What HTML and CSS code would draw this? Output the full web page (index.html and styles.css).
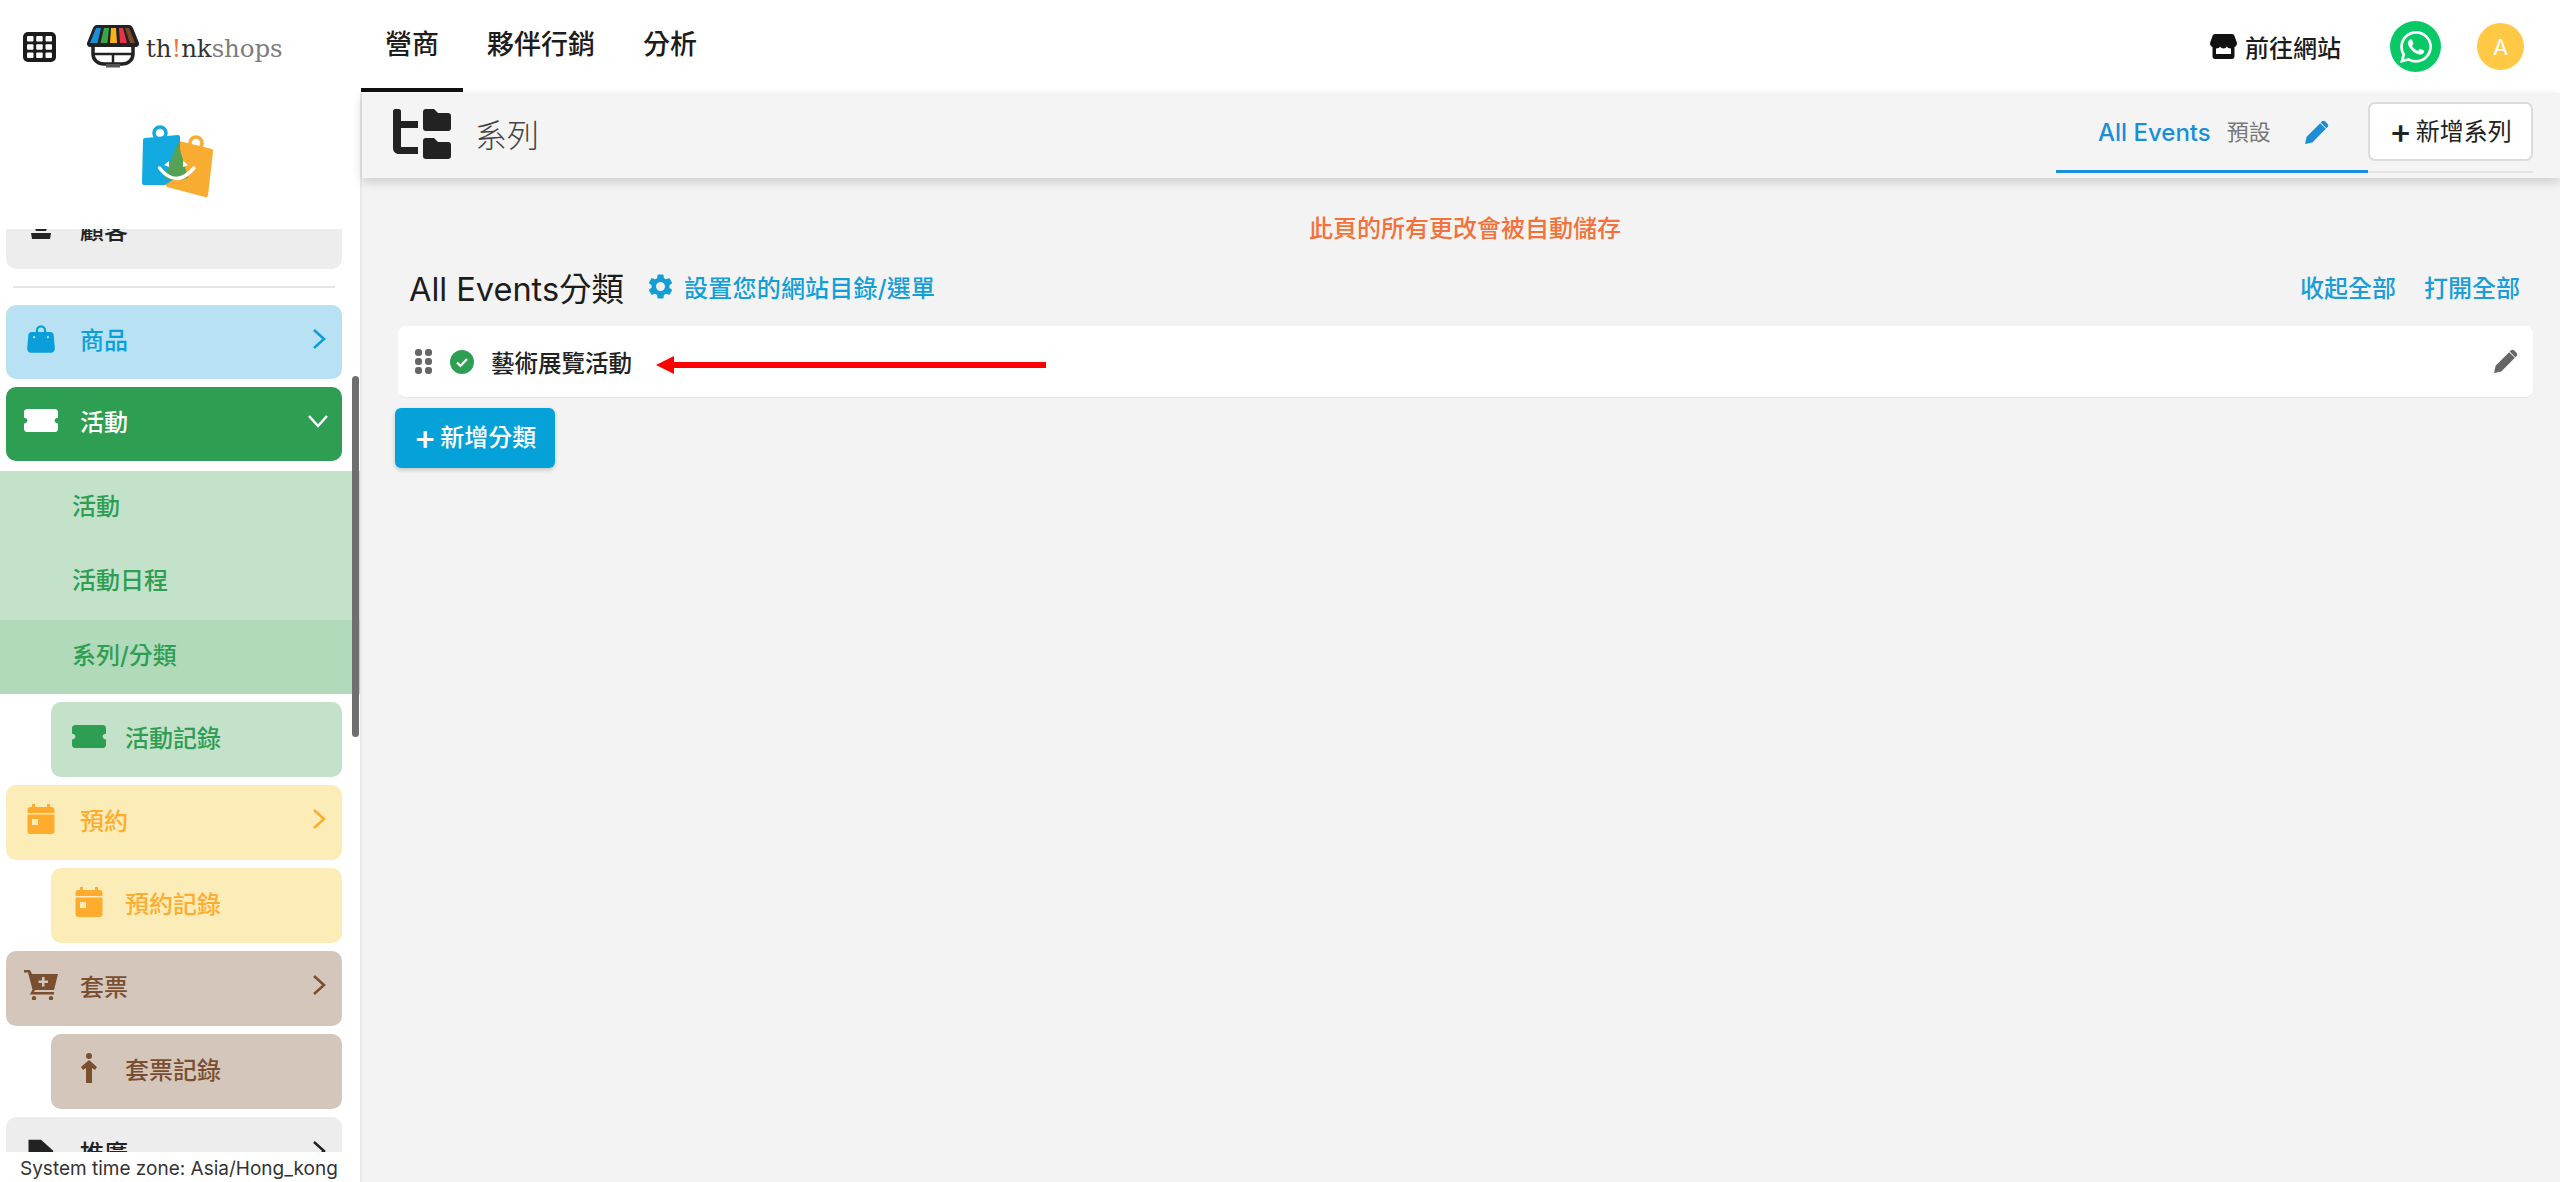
FILE: index.html
```html
<!DOCTYPE html>
<html lang="zh-Hant">
<head>
    <meta charset="UTF-8">
    <title>系列</title>
    <link rel="stylesheet" href="styles.css">
</head>
<body>

<header class="topbar">
    <div class="brand">
        <svg class="apps-icon" viewBox="0 0 33 30">
            <rect width="33" height="30" rx="5" fill="#1c1c1c"/>
            <g fill="#fff">
                <rect x="4" y="4" width="6.5" height="5.5" rx="1"/><rect x="13.2" y="4" width="6.5" height="5.5" rx="1"/><rect x="22.5" y="4" width="6.5" height="5.5" rx="1"/>
                <rect x="4" y="12.2" width="6.5" height="5.5" rx="1"/><rect x="13.2" y="12.2" width="6.5" height="5.5" rx="1"/><rect x="22.5" y="12.2" width="6.5" height="5.5" rx="1"/>
                <rect x="4" y="20.5" width="6.5" height="5.5" rx="1"/><rect x="13.2" y="20.5" width="6.5" height="5.5" rx="1"/><rect x="22.5" y="20.5" width="6.5" height="5.5" rx="1"/>
            </g>
        </svg>
        <svg class="shop-logo" viewBox="0 0 54 44">
            <path d="M7 20h40v10c0 6-5 10-11 10H18C12 40 7 36 7 30z" fill="#fff" stroke="#222" stroke-width="3.5"/>
            <path d="M8 30h38M27 30v9" stroke="#222" stroke-width="2.5" fill="none"/>
            <rect x="20" y="40" width="14" height="3.5" fill="#555"/>
            <path d="M11 1h32c2 0 3 1 4 3l6 15c.5 2-1 4-3 4H4c-2 0-3.5-2-3-4L7 4c1-2 2-3 4-3z" fill="#222"/>
            <path d="M10 4h5l-3.5 15H4z" fill="#1b8fd6"/>
            <path d="M18 4h5l-1.5 15h-7z" fill="#3aa648"/>
            <path d="M25 4h5l1 15h-7z" fill="#f6b21b"/>
            <path d="M33 4h4l4 15h-7z" fill="#e8344a"/>
            <path d="M39 4h4l6 15h-5z" fill="#7b4a26"/>
        </svg>
        <span class="shop-name">th<b>!</b>nk<i>shops</i></span>
    </div>
    <nav class="topnav">
        <a class="topnav-link active">營商</a>
        <a class="topnav-link">夥伴行銷</a>
        <a class="topnav-link">分析</a>
    </nav>
    <div class="topbar-right">
        <a class="site-link">
            <svg viewBox="0 0 27 25"><path d="M5 0h17c1.500 0 2 .7 2.500 2L27 9c0 2-1 3.500-2.500 4v9c0 1.700-1 3-2.500 3H5c-1.500 0-2.500-1.300-2.500-3v-9C1 12.500 0 11 0 9l2.500-7C3 .7 3.500 0 5 0zM6 14.500V20h15v-5.500c-2.500 0-3.500-1-4-2-.7 1-2 2-3.500 2s-2.800-1-3.500-2c-.5 1-1.500 2-4 2z" fill="#111" fill-rule="evenodd"/></svg>
            前往網站
        </a>
        <span class="whatsapp">
            <svg viewBox="0 0 24 24"><path fill="#fff" d="M17.472 14.382c-.297-.149-1.758-.867-2.03-.967-.273-.099-.471-.148-.67.15-.197.297-.767.966-.94 1.164-.173.199-.347.223-.644.075-.297-.15-1.255-.463-2.39-1.475-.883-.788-1.48-1.761-1.653-2.059-.173-.297-.018-.458.13-.606.134-.133.298-.347.446-.52.149-.174.198-.298.298-.497.099-.198.05-.371-.025-.52-.075-.149-.669-1.612-.916-2.207-.242-.579-.487-.5-.669-.51-.173-.008-.371-.01-.57-.01-.198 0-.52.074-.792.372-.272.297-1.04 1.016-1.04 2.479 0 1.462 1.065 2.875 1.213 3.074.149.198 2.096 3.2 5.077 4.487.709.306 1.262.489 1.694.625.712.227 1.36.195 1.871.118.571-.085 1.758-.719 2.006-1.413.248-.694.248-1.289.173-1.413-.074-.124-.272-.198-.57-.347m-5.421 7.403h-.004a9.87 9.87 0 01-5.031-1.378l-.361-.214-3.741.982.998-3.648-.235-.374a9.86 9.86 0 01-1.51-5.26c.001-5.45 4.436-9.884 9.888-9.884 2.64 0 5.122 1.03 6.988 2.898a9.825 9.825 0 012.893 6.994c-.003 5.45-4.437 9.884-9.885 9.884m8.413-18.297A11.815 11.815 0 0012.05 0C5.495 0 .16 5.335.157 11.892c0 2.096.547 4.142 1.588 5.945L.057 24l6.305-1.654a11.882 11.882 0 005.683 1.448h.005c6.554 0 11.89-5.335 11.893-11.893a11.821 11.821 0 00-3.48-8.413z"/></svg>
        </span>
        <span class="avatar">A</span>
    </div>
</header>

<div class="page">
    <aside class="sidebar">
        <div class="sidebar-logo">
            <svg viewBox="0 0 74 74" class="bags">
                <circle cx="55" cy="18" r="6" fill="none" stroke="#f8ac32" stroke-width="3.500"/>
                <path d="M30 14L71 24Q73 25 72 27L67 70Q67 73 64 72L26 62Q24 61 25 59z" fill="#f8ac32"/>
                <circle cx="19" cy="8" r="6" fill="none" stroke="#12a8e0" stroke-width="3.500"/>
                <path d="M4 13L37 10Q39 10 39 12V50L24 60H3Q1 60 1 58L2 15Q2 13 4 13z" fill="#12a8e0"/>
                <path d="M37 17L23 53Q35 57 47 53z" fill="#55a257"/>
                <path d="M18.500 43Q35 64 53 43" fill="none" stroke="#fff" stroke-width="3.500" stroke-linecap="round"/>
                <path d="M23 40l5-4v6zM47 40l-5-4v6z" fill="#fff"/>
            </svg>
        </div>
        <div class="menu-wrap">
            <div class="menu">
                <a class="menu-item grey">
                    <svg viewBox="0 0 34 30"><path d="M0 6h34v4H0zM9 10h16l-3 8H12zM7 20h20l-1 6H8z"/></svg>
                    <span>顧客</span>
                </a>
                <hr class="menu-divider">
                <a class="menu-item short blue">
                    <svg viewBox="0 0 24 26"><path fill-rule="evenodd" d="M7.500 8V6.500a4.500 4.500 0 0 1 9 0V8H20c2 0 3 1.200 3 3l1 11.500c0 2-1.500 3.500-3.500 3.500h-17C1.500 26 0 24.500 0 22.500L1 11c0-1.800 1-3 3-3zm2 0h5V6.500a2.500 2.500 0 0 0-5 0zM6 11.500a1 1 0 1 0 0 2 1 1 0 0 0 0-2zm12 0a1 1 0 1 0 0 2 1 1 0 0 0 0-2z" transform="translate(0 -1)"/></svg>
                    <span>商品</span>
                    <svg class="chevron" viewBox="0 0 14 22"><path d="M2 2l10 9-10 9"/></svg>
                </a>
                <a class="menu-item short green">
                    <svg class="ticket" viewBox="2 4 20 16" preserveAspectRatio="none"><path d="M22 10V6c0-1.110-.9-2-2-2H4c-1.100 0-1.990.89-1.990 2v4c1.100 0 1.990.9 1.990 2s-.89 2-2 2v4c0 1.100.9 2 2 2h16c1.100 0 2-.9 2-2v-4c-1.100 0-2-.9-2-2s.9-2 2-2z"/></svg>
                    <span>活動</span>
                    <svg class="chevron down" viewBox="0 0 22 14"><path d="M2 2l9 10 9-10"/></svg>
                </a>
                <div class="submenu">
                    <a class="submenu-row">活動</a>
                    <a class="submenu-row">活動日程</a>
                    <a class="submenu-row selected">系列/分類</a>
                </div>
                <a class="menu-item child green-light">
                    <svg class="ticket" viewBox="2 4 20 16" preserveAspectRatio="none"><path d="M22 10V6c0-1.110-.9-2-2-2H4c-1.100 0-1.990.89-1.990 2v4c1.100 0 1.990.9 1.990 2s-.89 2-2 2v4c0 1.100.9 2 2 2h16c1.100 0 2-.9 2-2v-4c-1.100 0-2-.9-2-2s.9-2 2-2z"/></svg>
                    <span>活動記錄</span>
                </a>
                <a class="menu-item yellow">
                    <svg viewBox="3 1 18 20"><path fill-rule="evenodd" d="M6 1h2v2h8V1h2v2h1a2 2 0 0 1 2 2v2H3V5a2 2 0 0 1 2-2h1zM3 8h18v11a2 2 0 0 1-2 2H5a2 2 0 0 1-2-2zm3 3v4h4v-4z"/></svg>
                    <span>預約</span>
                    <svg class="chevron" viewBox="0 0 14 22"><path d="M2 2l10 9-10 9"/></svg>
                </a>
                <a class="menu-item child yellow">
                    <svg viewBox="3 1 18 20"><path fill-rule="evenodd" d="M6 1h2v2h8V1h2v2h1a2 2 0 0 1 2 2v2H3V5a2 2 0 0 1 2-2h1zM3 8h18v11a2 2 0 0 1-2 2H5a2 2 0 0 1-2-2zm3 3v4h4v-4z"/></svg>
                    <span>預約記錄</span>
                </a>
                <a class="menu-item brown">
                    <svg class="cart" viewBox="0 0 34 30"><path fill-rule="evenodd" d="M0 0h6l2 4h26l-4 16H11l-1 2h20v2.500H6l2.500-5L4 2.500H0zM18 7v3.500h-3.500v2.500H18v3.500h2.500V13H24v-2.500h-3.500V7zM10 26a2.200 2.200 0 1 1 0 4.400 2.200 2.200 0 0 1 0-4.400zm17 0a2.200 2.200 0 1 1 0 4.400 2.200 2.200 0 0 1 0-4.400z"/></svg>
                    <span>套票</span>
                    <svg class="chevron" viewBox="0 0 14 22"><path d="M2 2l10 9-10 9"/></svg>
                </a>
                <a class="menu-item child brown">
                    <svg viewBox="0 0 24 30" class="man"><circle cx="12" cy="3" r="3"/><path d="M12 7l8 7-2 3-3-2v15H9V15l-3 2-2-3z"/></svg>
                    <span>套票記錄</span>
                </a>
                <a class="menu-item grey">
                    <svg viewBox="0 0 24 24"><path d="M2 3h10l10 9-7 10-13-8z"/></svg>
                    <span>推廣</span>
                    <svg class="chevron" viewBox="0 0 14 22"><path d="M2 2l10 9-10 9"/></svg>
                </a>
            </div>
            <div class="scroll-thumb"></div>
        </div>
        <div class="timezone">System time zone: Asia/Hong_kong</div>
    </aside>

    <main class="content">
        <div class="subheader">
            <svg class="tree-icon" viewBox="0 0 58 50">
                <path d="M0 2c0-1 1-2 2-2h4c1 0 2 1 2 2v10h17v7H8v19h17v7H6c-3.500 0-6-2.500-6-6z" fill="#222"/>
                <path d="M30 3c0-2 1-3 3-3h8l4 4h10c2 0 3 1 3 3v12c0 2-1 3-3 3H33c-2 0-3-1-3-3zM30 32c0-2 1-3 3-3h8l4 4h10c2 0 3 1 3 3v11c0 2-1 3-3 3H33c-2 0-3-1-3-3z" fill="#222"/>
            </svg>
            <h1 class="page-title">系列</h1>
            <div class="tabs">
                <div class="tab active">
                    <span class="tab-name">All Events</span>
                    <span class="tab-tag">預設</span>
                    <svg viewBox="0 0 24 24" class="pencil blue-fill"><path d="M1 23l1.500-7L15.500 3l5.500 5.500L8 21.500zM17 1.500c1-1 2.500-1 3.500 0l2 2c1 1 1 2.500 0 3.500l-1 1L16 2.500z"/></svg>
                </div>
                <button class="add-series"><span class="plus">+</span>新增系列</button>
            </div>
        </div>

        <div class="body-area">
            <p class="autosave">此頁的所有更改會被自動儲存</p>
            <div class="section-head">
                <h2 class="section-title">All Events分類</h2>
                <a class="link-setting">
                    <svg viewBox="3 2 18 20"><path d="M19.140 12.940c.04-.3.06-.61.06-.94 0-.32-.02-.64-.07-.94l2.030-1.580c.18-.14.23-.41.12-.61l-1.920-3.320c-.12-.22-.37-.29-.59-.22l-2.390.96c-.5-.38-1.030-.7-1.620-.94l-.36-2.540c-.04-.24-.24-.41-.48-.41h-3.840c-.24 0-.43.17-.47.41l-.36 2.540c-.59.24-1.130.57-1.620.94l-2.390-.96c-.22-.08-.47 0-.59.22L2.740 8.870c-.12.21-.08.47.12.61l2.030 1.580c-.05.3-.09.63-.09.94s.02.64.07.94l-2.030 1.580c-.18.14-.23.41-.12.61l1.920 3.320c.12.22.37.29.59.22l2.390-.96c.5.38 1.030.7 1.620.94l.36 2.540c.05.24.24.41.48.41h3.840c.24 0 .44-.17.47-.41l.36-2.540c.59-.24 1.130-.56 1.620-.94l2.390.96c.22.08.47 0 .59-.22l1.920-3.320c.12-.22.07-.47-.12-.61l-2.010-1.580zM12 15.600c-1.980 0-3.600-1.620-3.600-3.600s1.620-3.600 3.600-3.600 3.600 1.620 3.600 3.600-1.620 3.600-3.600 3.600z"/></svg>
                    設置您的網站目錄/選單
                </a>
                <div class="section-actions">
                    <a>收起全部</a>
                    <a>打開全部</a>
                </div>
            </div>
            <div class="category-row">
                <svg class="drag" viewBox="0 0 19 27"><g fill="#666"><rect x="1" y="1" width="7" height="7" rx="3"/><rect x="11" y="1" width="7" height="7" rx="3"/><rect x="1" y="10" width="7" height="7" rx="3"/><rect x="11" y="10" width="7" height="7" rx="3"/><rect x="1" y="19" width="7" height="7" rx="3"/><rect x="11" y="19" width="7" height="7" rx="3"/></g></svg>
                <svg class="check" viewBox="0 0 24 24"><circle cx="12" cy="12" r="12" fill="#2e9e53"/><path d="M7 12.500l3.500 3.500L17 9" fill="none" stroke="#fff" stroke-width="2.200"/></svg>
                <span class="category-name">藝術展覽活動</span>
                <svg viewBox="0 0 24 24" class="pencil grey-fill"><path d="M1 23l1.500-7L15.500 3l5.500 5.500L8 21.500zM17 1.500c1-1 2.500-1 3.500 0l2 2c1 1 1 2.500 0 3.500l-1 1L16 2.500z"/></svg>
                <svg class="red-arrow" viewBox="0 0 390 18"><path d="M0 9L18 0v6h372v6H18v6z" fill="#f00"/></svg>
            </div>
            <button class="add-category"><span class="plus">+</span>新增分類</button>
        </div>
    </main>
</div>

</body>
</html>
```

FILE: styles.css
```css
* {
    box-sizing: border-box;
}
html, body {
    height: 100%;
    margin: 0;
}
body {
    font-family: Inter, "Noto Sans CJK TC", sans-serif;
    color: #1c1c1c;
    background-color: #fff;
    display: flex;
    flex-direction: column;
    overflow: hidden;
}
a {
    cursor: pointer;
}

/* top bar */
.topbar {
    height: 93px;
    flex: none;
    display: flex;
    align-items: center;
    background-color: #fff;
}
.brand {
    width: 361px;
    display: flex;
    align-items: center;
    padding-left: 23px;
}
.apps-icon {
    width: 33px;
    height: 30px;
    margin-right: 30px;
}
.shop-logo {
    width: 54px;
    height: 44px;
    margin-top: -1px;
}
.shop-name {
    font-family: "DejaVu Serif", serif;
    font-size: 24.500px;
    letter-spacing: -0.100px;
    color: #333;
    margin-left: 6px;
    margin-top: 3px;
}
.shop-name b {
    color: #f0743e;
    font-weight: 400;
}
.shop-name i {
    color: #7d7d7d;
    font-style: normal;
}
.topnav {
    display: flex;
    align-self: stretch;
    margin-top: -1px;
}
.topnav-link {
    height: 93px;
    padding: 0 24px;
    display: flex;
    align-items: center;
    font-size: 27px;
    font-weight: 500;
    padding-bottom: 3px;
    border-bottom: 4px solid transparent;
}
.topnav-link.active {
    border-bottom-color: #111;
}
.topbar-right {
    margin-left: auto;
    display: flex;
    align-items: center;
    padding-right: 36px;
}
.site-link {
    display: flex;
    align-items: center;
    font-size: 24px;
    font-weight: 500;
    margin-right: 49px;
}
.site-link svg {
    width: 27px;
    height: 25px;
    margin-right: 8px;
}
.whatsapp {
    width: 51px;
    height: 51px;
    border-radius: 50%;
    background-color: #09c966;
    display: flex;
    align-items: center;
    justify-content: center;
    margin-right: 36px;
}
.whatsapp svg {
    width: 32px;
    height: 32px;
}
.avatar {
    width: 47px;
    height: 47px;
    border-radius: 50%;
    background-color: #ffc845;
    color: #fff;
    font-size: 22px;
    display: flex;
    align-items: center;
    justify-content: center;
}

/* sidebar */
.page {
    flex: 1;
    display: flex;
    min-height: 0;
}
.sidebar {
    width: 362px;
    flex: none;
    display: flex;
    flex-direction: column;
    border-right: 2px solid #e8e8e8;
    background-color: #fff;
}
.sidebar-logo {
    height: 136px;
    flex: none;
    display: flex;
    align-items: flex-start;
    padding: 32px 0 0 141px;
}
.bags {
    width: 74px;
    height: 74px;
}
.menu-wrap {
    flex: 1;
    position: relative;
    overflow: hidden;
    min-height: 0;
}
.menu {
    display: flex;
    flex-direction: column;
    gap: 8px;
    padding: 0 18px 0 6px;
    margin-top: -35px;
}
.menu-item {
    height: 75px;
    flex: none;
    display: flex;
    align-items: center;
    padding: 0 16px 7px 18px;
    border-radius: 10px;
    font-size: 24px;
    font-weight: 500;
}
.menu-item.short {
    height: 74px;
}
.menu-item.child {
    margin-left: 45px;
    padding-left: 21px;
}
.menu-item > svg:first-child {
    width: 34px;
    height: 30px;
    margin-right: 22px;
    fill: currentColor;
}
.menu-item.child > svg:first-child {
    margin-right: 19px;
}
.menu-item > svg.ticket {
    height: 23px;
}
.chevron {
    width: 14px;
    height: 22px;
    margin-left: auto;
    fill: none;
    stroke: currentColor;
    stroke-width: 2.500;
}
.chevron.down {
    width: 22px;
    height: 14px;
    margin-right: -3px;
}
.grey { background-color: #ededed; color: #222; }
.blue { background-color: #b8e2f3; color: #0a9fdb; }
.green { background-color: #2e9e53; color: #fff; }
.green-light { background-color: #c4e1ca; color: #2e9e53; }
.yellow { background-color: #fcedb8; color: #ffab2e; }
.brown { background-color: #d5c6bc; color: #7a4f2f; }
.menu-divider {
    border: none;
    border-top: 2px solid #e6e6e6;
    margin: 9px 7px;
}
.submenu {
    margin: 2px -18px 0 -6px;
    height: 223px;
    flex: none;
    display: flex;
    flex-direction: column;
    background-color: #c4e1ca;
}
.submenu-row {
    flex: 1;
    display: flex;
    align-items: center;
    padding: 0 0 7px 72px;
    font-size: 24px;
    font-weight: 500;
    color: #2e9e53;
}
.submenu-row.selected {
    background-color: #b1dabb;
}
.scroll-thumb {
    position: absolute;
    top: 147px;
    right: 1px;
    width: 7px;
    height: 361px;
    border-radius: 4px;
    background-color: #6f6f6f;
}
.timezone {
    height: 30px;
    flex: none;
    padding: 4px 0 0 20px;
    font-size: 19px;
    line-height: 26px;
    color: #333;
    background-color: #fff;
    white-space: nowrap;
}

/* main area */
.content {
    flex: 1;
    min-width: 0;
    background-color: #f3f3f3;
    display: flex;
    flex-direction: column;
}
.subheader {
    height: 85px;
    flex: none;
    display: flex;
    align-items: center;
    padding-left: 31px;
    padding-right: 27px;
    box-shadow: 0 4px 10px rgba(0, 0, 0, 0.16);
    background-color: #f4f4f4;
    position: relative;
}
.tree-icon {
    width: 58px;
    height: 50px;
    margin-top: -3px;
}
.page-title {
    margin: -5px 0 0 24px;
    font-size: 32px;
    font-weight: 300;
    color: #444;
}
.tabs {
    margin-left: auto;
    display: flex;
    align-self: flex-start;
    height: 80px;
    border-bottom: 2px solid #e3e3e3;
}
.tab {
    width: 312px;
    display: flex;
    align-items: center;
    padding-left: 42px;
    padding-top: 2px;
    margin-bottom: -2px;
    border-bottom: 3px solid #1a8fd8;
}
.tab-name {
    font-size: 24px;
    font-weight: 500;
    color: #1a8fd8;
}
.tab-tag {
    font-size: 22px;
    color: #777;
    margin: -5px 0 0 16px;
}
.pencil {
    width: 25px;
    height: 25px;
}
.blue-fill {
    fill: #1a8fd8;
    margin-left: 33px;
}
.grey-fill {
    fill: #666;
    margin-left: auto;
}
.add-series {
    width: 165px;
    height: 59px;
    margin-top: 9px;
    border: 2px solid #dcdcdc;
    border-radius: 7px;
    background-color: #fff;
    font-family: inherit;
    font-size: 24px;
    font-weight: 400;
    color: #222;
    padding: 0 0 4px;
}
.plus {
    font-size: 34px;
    font-weight: 500;
    line-height: 1;
    margin-right: 4px;
    vertical-align: -3px;
}
.body-area {
    flex: 1;
    padding: 0 27px 0 35px;
}
.autosave {
    margin: 36px 0 0;
    text-align: center;
    font-size: 24px;
    font-weight: 500;
    line-height: 30px;
    color: #f4713a;
}
.section-head {
    display: flex;
    align-items: center;
    height: 42px;
    margin-top: 21px;
    padding: 0 13px 0 12px;
}
.section-title {
    margin: 0 25px 0 0;
    font-size: 32.500px;
    font-weight: 400;
}
.link-setting {
    display: flex;
    align-items: center;
    font-size: 24px;
    font-weight: 500;
    letter-spacing: 0.200px;
    color: #129fd8;
}
.link-setting svg {
    width: 23px;
    height: 25px;
    margin-right: 12px;
    fill: #129fd8;
}
.section-actions {
    margin-left: auto;
    display: flex;
    gap: 28px;
    font-size: 24px;
    font-weight: 500;
    color: #1a9dd8;
}
.category-row {
    height: 72px;
    margin: 19px 0 0 1px;
    display: flex;
    align-items: center;
    padding: 0 15px 0 16px;
    background-color: #fff;
    border-radius: 8px;
    border-bottom: 1px solid #dfe9ee;
    position: relative;
}
.drag {
    width: 19px;
    height: 27px;
}
.check {
    width: 24px;
    height: 24px;
    margin-left: 17px;
}
.category-name {
    margin-left: 17px;
    font-size: 23.500px;
    font-weight: 500;
    color: #222;
}
.red-arrow {
    position: absolute;
    left: 258px;
    top: 30px;
    width: 390px;
    height: 18px;
}
.add-category {
    display: block;
    width: 160px;
    height: 60px;
    margin: 10px 0 0 -2px;
    border: none;
    border-radius: 6px;
    background-color: #05a2da;
    color: #fff;
    font-family: inherit;
    font-size: 24px;
    font-weight: 500;
    padding: 0 0 4px;
    box-shadow: 0 2px 4px rgba(0, 0, 0, 0.2);
}
```
